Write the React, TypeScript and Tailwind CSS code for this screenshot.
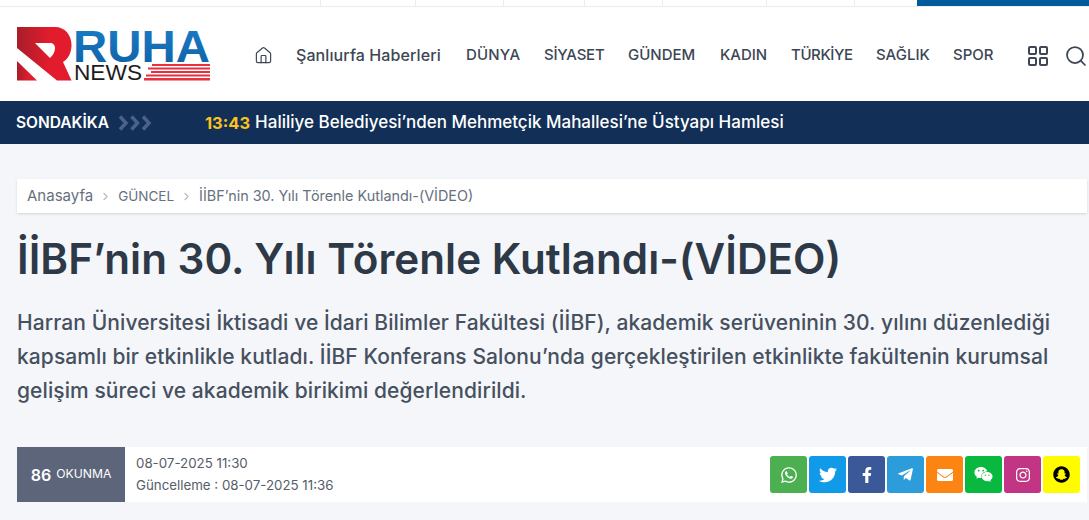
import React from 'react';
import { FaWhatsapp, FaTwitter, FaFacebookF, FaTelegramPlane, FaEnvelope, FaWeixin, FaInstagram, FaSnapchat } from 'react-icons/fa';
import { Home, ChevronRight, LayoutGrid, Search } from 'lucide-react';

const navItems = [
  { label: 'DÜNYA', width: 'w-[54px]', tracking: 'tracking-[0.2px]' },
  { label: 'SİYASET', width: 'w-[60px]', tracking: 'tracking-[-0.25px]' },
  { label: 'GÜNDEM', width: 'w-[68px]', tracking: 'tracking-[0px]' },
  { label: 'KADIN', width: 'w-[47px]', tracking: 'tracking-[0px]' },
  { label: 'TÜRKİYE', width: 'w-[61px]', tracking: 'tracking-[-0.4px]' },
  { label: 'SAĞLIK', width: 'w-[53px]', tracking: 'tracking-[0px]' },
  { label: 'SPOR', width: 'w-[41px]', tracking: 'tracking-[0px]' },
];

const topCells = ['w-[321px]', 'w-[95px]', 'w-[88px]', 'w-[81px]', 'w-[78px]', 'w-[104px]', 'w-[88px]'];

const shareButtons = [
  { icon: FaWhatsapp, bg: 'bg-[#4caf50]', size: 'text-[18px]', color: 'text-white' },
  { icon: FaTwitter, bg: 'bg-[#109ae8]', size: 'text-[18px]', color: 'text-white' },
  { icon: FaFacebookF, bg: 'bg-[#3b5998]', size: 'text-[16px]', color: 'text-white' },
  { icon: FaTelegramPlane, bg: 'bg-[#2d9cdb]', size: 'text-[17px]', color: 'text-white' },
  { icon: FaEnvelope, bg: 'bg-[#fb8412]', size: 'text-[16px]', color: 'text-white' },
  { icon: FaWeixin, bg: 'bg-[#09b83e]', size: 'text-[19px]', color: 'text-white' },
  { icon: FaInstagram, bg: 'bg-[#c13584]', size: 'text-[16px]', color: 'text-white' },
  { icon: FaSnapchat, bg: 'bg-[#fffc00]', size: 'text-[17px]', color: 'text-black' },
];

function Logo() {
  return (
    <svg width="194" height="55" viewBox="0 0 194 55" className="shrink-0 overflow-visible">
      <defs>
        <linearGradient id="r" x1="0" x2="1" y1="0" y2="0">
          <stop offset="0" stopColor="#a81e2a" />
          <stop offset="0.6" stopColor="#e21b2d" />
        </linearGradient>
        <linearGradient id="b" x1="0" x2="0" y1="0" y2="1">
          <stop offset="0" stopColor="#1a80c8" />
          <stop offset="1" stopColor="#0f5fa6" />
        </linearGradient>
      </defs>
      <text x="56" y="34.5" fontFamily="Liberation Sans, sans-serif" fontWeight="700" fontSize="45" fill="url(#b)" textLength="137" lengthAdjust="spacingAndGlyphs">RUHA</text>
      <path d="M0 0H38C48 0 54.5 8 54.5 18C54.5 26 51 32 46 35L54.5 53.5H40L0 21ZM18 16L33 31C36 28 38 25 38 21C38 18 36 16 33 16Z" fill="url(#r)" fillRule="evenodd" />
      <path d="M0 34L20 53.5H0Z" fill="url(#r)" />
      <text x="57" y="53" fontFamily="Liberation Sans, sans-serif" fontSize="22" fill="#1c1c1c" textLength="68" lengthAdjust="spacingAndGlyphs">NEWS</text>
      <g fill="#e8303f">
        <rect x="135" y="37" width="58" height="2" />
        <rect x="131" y="40.5" width="62" height="2" />
        <rect x="134" y="44" width="59" height="2" />
        <rect x="129" y="47.5" width="64" height="2" />
        <rect x="127" y="51" width="66" height="2.5" />
      </g>
    </svg>
  );
}

function TripleChevron() {
  return (
    <svg width="36" height="16" viewBox="0 0 36 16" fill="none" stroke="#4a6288" strokeWidth="3.5" className="ml-[10px]">
      <path d="M2 1.5L8 8L2 14.5" />
      <path d="M13.5 1.5L19.5 8L13.5 14.5" />
      <path d="M25 1.5L31 8L25 14.5" />
    </svg>
  );
}

export default function App() {
  return (
    <div className="w-[1089px] h-[520px] overflow-hidden bg-[#f4f6f9] font-['Inter',sans-serif] text-[#3d4654]">
      <div className="h-[7px] bg-white border-b border-[#ececec] flex">
        {topCells.map((w, i) => (
          <div key={i} className={`${w} h-full border-r border-[#ececec]`} />
        ))}
        <div className="ml-auto w-[172px] h-[6px] bg-[#005b9c]" />
      </div>

      <header className="h-[94px] bg-white flex items-center pl-[17px] whitespace-nowrap">
        <Logo />
        <nav className="flex items-center ml-[43px] gap-6 text-[15px] font-medium pt-[2px]">
          <Home className="w-[19px] h-[19px] -mr-[1px]" strokeWidth={1.5} />
          <span className="text-[16px] w-[146px] tracking-[0.1px]">Şanlıurfa Haberleri</span>
          {navItems.map((item) => (
            <span key={item.label} className={`${item.width} ${item.tracking}`}>{item.label}</span>
          ))}
        </nav>
        <LayoutGrid className="w-[24px] h-[24px] ml-[32px] shrink-0 mt-[3px]" strokeWidth={2} />
        <Search className="w-[24px] h-[24px] ml-[14px] shrink-0 mt-[3px]" strokeWidth={1.75} />
      </header>

      <div className="h-[43px] bg-[#122f57] flex items-center pl-4 pt-[1px] text-white font-medium whitespace-nowrap">
        <span className="text-[15.5px] font-semibold w-[92px]">SONDAKİKA</span>
        <TripleChevron />
        <span className="ml-[51px] text-[#fcc419] text-[16.5px] font-bold">13:43</span>
        <span className="ml-[5px] text-[17px]">Haliliye Belediyesi’nden Mehmetçik Mahallesi’ne Üstyapı Hamlesi</span>
      </div>

      <main className="pl-[17px] pr-[2px] pt-[35px]">
        <div className="h-[34px] bg-white shadow-sm flex items-center pl-[10px] gap-[6px] text-[14.4px] text-[#67707e]">
          <span className="text-[15px]">Anasayfa</span>
          <ChevronRight className="w-[13px] h-[13px] text-[#b5bac2]" />
          <span className="text-[13.5px]">GÜNCEL</span>
          <ChevronRight className="w-[13px] h-[13px] text-[#b5bac2]" />
          <span>İİBF’nin 30. Yılı Törenle Kutlandı-(VİDEO)</span>
        </div>

        <h1 className="mt-[20px] text-[42.2px] leading-[52px] font-semibold text-[#2e3948] whitespace-nowrap">İİBF’nin 30. Yılı Törenle Kutlandı-(VİDEO)</h1>

        <p className="mt-[21px] text-[21px] leading-[34px] font-medium text-[#46505f] tracking-[0.08px]">
          Harran Üniversitesi İktisadi ve İdari Bilimler Fakültesi (İİBF), akademik serüveninin 30. yılını düzenlediği kapsamlı bir etkinlikle kutladı. İİBF Konferans Salonu’nda gerçekleştirilen etkinlikte fakültenin kurumsal gelişim süreci ve akademik birikimi değerlendirildi.
        </p>

        <div className="mt-[39px] h-[55px] bg-white flex items-center">
          <div className="w-[108px] h-full bg-[#5c6579] text-white flex items-center justify-center gap-[5px]">
            <span className="text-[16px] font-semibold">86</span>
            <span className="text-[12.2px]">OKUNMA</span>
          </div>
          <div className="ml-[11px] -mt-[1px] text-[13.3px] leading-[22px] text-[#555d6a]">
            <div>08-07-2025 11:30</div>
            <div>Güncelleme : 08-07-2025 11:36</div>
          </div>
          <div className="ml-auto mr-[7px] flex gap-[2px]">
            {shareButtons.map(({ icon: Icon, bg, size, color }, i) => (
              <div key={i} className={`w-[37px] h-[37px] rounded-[3px] flex items-center justify-center ${bg} ${size} ${color}`}>
                <Icon />
              </div>
            ))}
          </div>
        </div>
      </main>
    </div>
  );
}
